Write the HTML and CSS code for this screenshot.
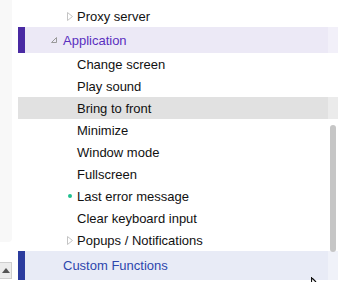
FILE: index.html
```html
<!DOCTYPE html>
<html>
<head>
<meta charset="utf-8">
<link rel="stylesheet" href="styles.css">
</head>
<body>
<div class="app">
  <aside class="side">
    <div class="side-panel"></div>
    <div class="spin"><svg width="8" height="5" viewBox="0 0 8 5"><path d="M0 5 L4 0 L8 5 Z" fill="#555"/></svg></div>
  </aside>
  <main class="tree">
    <div class="row child"><span class="ico"><svg width="6" height="9" viewBox="0 0 6 9"><path d="M0.5 0.5 L5.5 4.5 L0.5 8.5 Z" fill="none" stroke="#c4c4c4"/></svg></span><span class="label">Proxy server</span></div>
    <div class="row group purple"><span class="ico"><svg width="6" height="6" viewBox="0 0 6 6"><path d="M5.5 0.5 L5.5 5.5 L0.5 5.5 Z" fill="none" stroke="#9a9a9a"/></svg></span><span class="label">Application</span></div>
    <div class="row child"><span class="ico"></span><span class="label">Change screen</span></div>
    <div class="row child"><span class="ico"></span><span class="label">Play sound</span></div>
    <div class="row child hover"><span class="ico"></span><span class="label">Bring to front</span></div>
    <div class="row child"><span class="ico"></span><span class="label">Minimize</span></div>
    <div class="row child"><span class="ico"></span><span class="label">Window mode</span></div>
    <div class="row child"><span class="ico"></span><span class="label">Fullscreen</span></div>
    <div class="row child"><span class="ico"><span class="dot"></span></span><span class="label">Last error message</span></div>
    <div class="row child"><span class="ico"></span><span class="label">Clear keyboard input</span></div>
    <div class="row child"><span class="ico"><svg width="6" height="9" viewBox="0 0 6 9"><path d="M0.5 0.5 L5.5 4.5 L0.5 8.5 Z" fill="none" stroke="#c4c4c4"/></svg></span><span class="label">Popups / Notifications</span></div>
    <div class="row group blue"><span class="ico"></span><span class="label">Custom Functions</span></div>
  </main>
  <div class="scrollbar"><div class="thumb"></div></div>
  <svg class="cursor" width="8" height="6" viewBox="0 0 8 6"><path d="M0.5 0 L0.5 6 M0.5 0.5 L5 5" stroke="#111" stroke-width="1.2" fill="none"/></svg>
</div>
</body>
</html>
```

FILE: styles.css
```css
* { box-sizing: border-box; }
html, body { margin: 0; padding: 0; background: #fff; }
body {
  width: 340px;
  height: 282px;
  overflow: hidden;
  font-family: "Liberation Sans", Arial, sans-serif;
  font-size: 13px;
  color: #111;
}
.app {
  position: relative;
  display: flex;
  width: 340px;
  height: 282px;
}
.side {
  width: 12px;
  flex: none;
  display: flex;
  flex-direction: column;
}
.side-panel {
  height: 242px;
  background: #f8f8f8;
  border-bottom-right-radius: 4px;
}
.spin {
  margin-top: 20px;
  height: 17px;
  width: 12px;
  border: 1px solid #cfcfcf;
  border-left: none;
  background: #ececec;
  display: flex;
  align-items: center;
  justify-content: center;
}
.tree {
  margin-left: 6px;
  width: 320px;
  padding-top: 5px;
  display: flex;
  flex-direction: column;
}
.row {
  display: flex;
  align-items: center;
  height: 22px;
  flex: none;
  white-space: nowrap;
}
.ico {
  width: 8px;
  flex: none;
  display: flex;
  align-items: center;
  justify-content: center;
}
.child { padding-left: 48px; gap: 3px; }
.child.hover { background: #e1e1e1; }
.group {
  height: 26px;
  padding-left: 26px;
  gap: 6px;
  border-left: 7px solid transparent;
}
.group .ico { width: 6px; }
.group.purple { background: #ece9f6; border-left-color: #4a2aa3; color: #5a2fbf; }
.group.blue { background: #e8ebf6; border-left-color: #2b3c9e; color: #2d46ad; height: 29px; }
.dot {
  width: 4px;
  height: 4px;
  border-radius: 50%;
  background: #1fc08f;
}
.scrollbar {
  position: absolute;
  left: 328px;
  top: 0;
  width: 10px;
  height: 282px;
  background: rgba(255, 255, 255, 0.35);
}
.thumb {
  margin: 125px 0 0 2px;
  width: 6px;
  height: 127px;
  border-radius: 3px;
  background: #c6c6c6;
}
.cursor {
  position: absolute;
  left: 311px;
  top: 277px;
}
```
